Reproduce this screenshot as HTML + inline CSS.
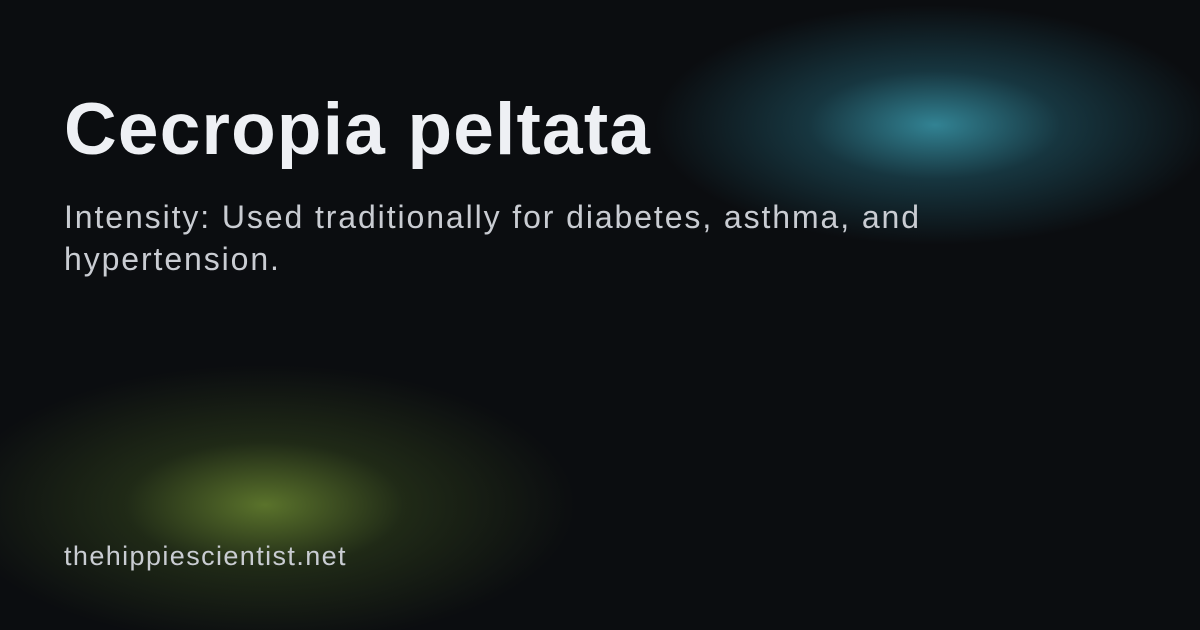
<!DOCTYPE html>
<html><head><meta charset="utf-8"><style>
html,body{margin:0;padding:0}
body{width:1200px;height:630px;overflow:hidden;position:relative;background:#0b0d10;font-family:"Liberation Sans",sans-serif}
.g1{position:absolute;left:0;top:0;width:1200px;height:630px;background:radial-gradient(ellipse 280px 120px at 935px 125px,rgba(60,160,180,0.8),rgba(40,115,135,0.4) 45%,rgba(11,13,16,0) 100%)}
.g2{position:absolute;left:0;top:0;width:1200px;height:630px;background:radial-gradient(ellipse 310px 140px at 265px 505px,rgba(110,140,50,0.8),rgba(70,95,35,0.35) 45%,rgba(11,13,16,0) 100%)}
h1{position:absolute;left:64px;top:88px;margin:0;font-size:73px;font-weight:bold;color:#eef0f4;letter-spacing:1.2px;line-height:84px}
p{position:absolute;left:64px;top:196px;margin:0;width:1000px;font-size:32px;line-height:42px;color:#c9ccd2;letter-spacing:1.9px}
.s{position:absolute;left:64px;top:541px;font-size:27px;color:#c9ccd2;letter-spacing:1.4px}
</style></head><body>
<div class="g1"></div><div class="g2"></div>
<h1>Cecropia peltata</h1>
<p>Intensity: Used traditionally for diabetes, asthma, and<br>hypertension.</p>
<div class="s">thehippiescientist.net</div>
</body></html>
